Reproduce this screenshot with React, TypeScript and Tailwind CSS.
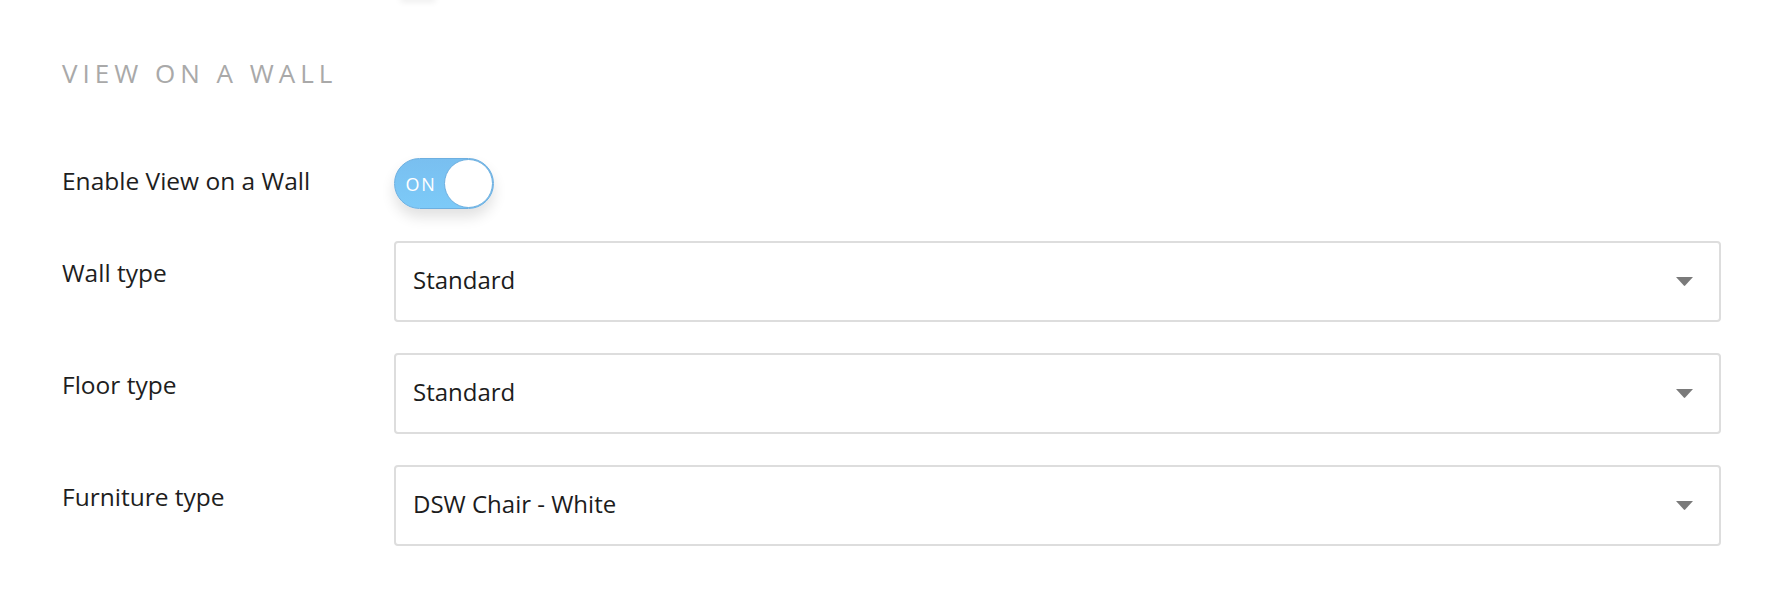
import React, { useState } from "react";

const font = { fontFamily: "'Open Sans', Lato, sans-serif" };

const selects = [
  { label: "Wall type", value: "Standard" },
  { label: "Floor type", value: "Standard" },
  { label: "Furniture type", value: "DSW Chair - White" },
];

const Toggle = ({ on, onClick }: { on: boolean; onClick: () => void }) => {
  return (
    <button
      onClick={onClick}
      className={`flex items-center w-[100px] h-[51px] rounded-full border border-[#6dafe0] shadow-[0_8px_14px_rgba(0,0,0,0.12)] ${
        on ? "bg-gradient-to-b from-[#79bff0] to-[#7ccaf8] flex-row" : "bg-[#e5e5e5] flex-row-reverse"
      }`}
    >
      <span className="flex-1 text-center pl-[3px] text-white text-[18px] tracking-[0.1em] leading-none">
        {on ? "ON" : "OFF"}
      </span>
      <span className="w-[49px] h-[49px] rounded-full bg-white border border-[#6dafe0]" />
    </button>
  );
};

const Select = ({ value }: { value: string }) => {
  return (
    <div className="flex-1 h-[81px] flex items-center justify-between rounded-[4px] border-2 border-[#dddddd] bg-white pl-[17px] pr-[26px] pb-[3px]">
      <span className="text-[24px] leading-[32px] text-[#1c1c1c]">{value}</span>
      <svg width="17" height="9" viewBox="0 0 17 9" className="mt-[3px]">
        <path d="M0 0 H17 L9.2 8.6 Q8.5 9.2 7.8 8.6 Z" fill="#7a7a7a" />
      </svg>
    </div>
  );
};

const App = () => {
  const [on, setOn] = useState(true);
  return (
    <div className="w-[1766px] h-[590px] bg-white overflow-hidden" style={font}>
      <div className="h-0 flex pl-[400px]">
        <div className="w-[36px] h-[6px] -mt-[6px] rounded-full shadow-[0_2px_6px_rgba(0,0,0,0.08)]" />
      </div>
      <div className="pl-[62px] pr-[45px] pt-[55px]">
        <h2 className="text-[26px] tracking-[5px] text-[#a9a9a9] leading-[36px]">
          VIEW ON A WALL
        </h2>
        <div className="flex items-start mt-[67px]">
          <div className="w-[332px] pt-[7px] text-[24.5px] text-[#1e1e1e] leading-[32px]">
            Enable View on a Wall
          </div>
          <Toggle on={on} onClick={() => setOn(!on)} />
        </div>
        <div className="mt-[32px] space-y-[31px]">
          {selects.map((s, i) => {
            return (
              <div key={i} className="flex items-start">
                <div className="w-[332px] pt-[16px] text-[24.5px] text-[#1e1e1e] leading-[32px]">
                  {s.label}
                </div>
                <Select value={s.value} />
              </div>
            );
          })}
        </div>
      </div>
    </div>
  );
};

export default App;
